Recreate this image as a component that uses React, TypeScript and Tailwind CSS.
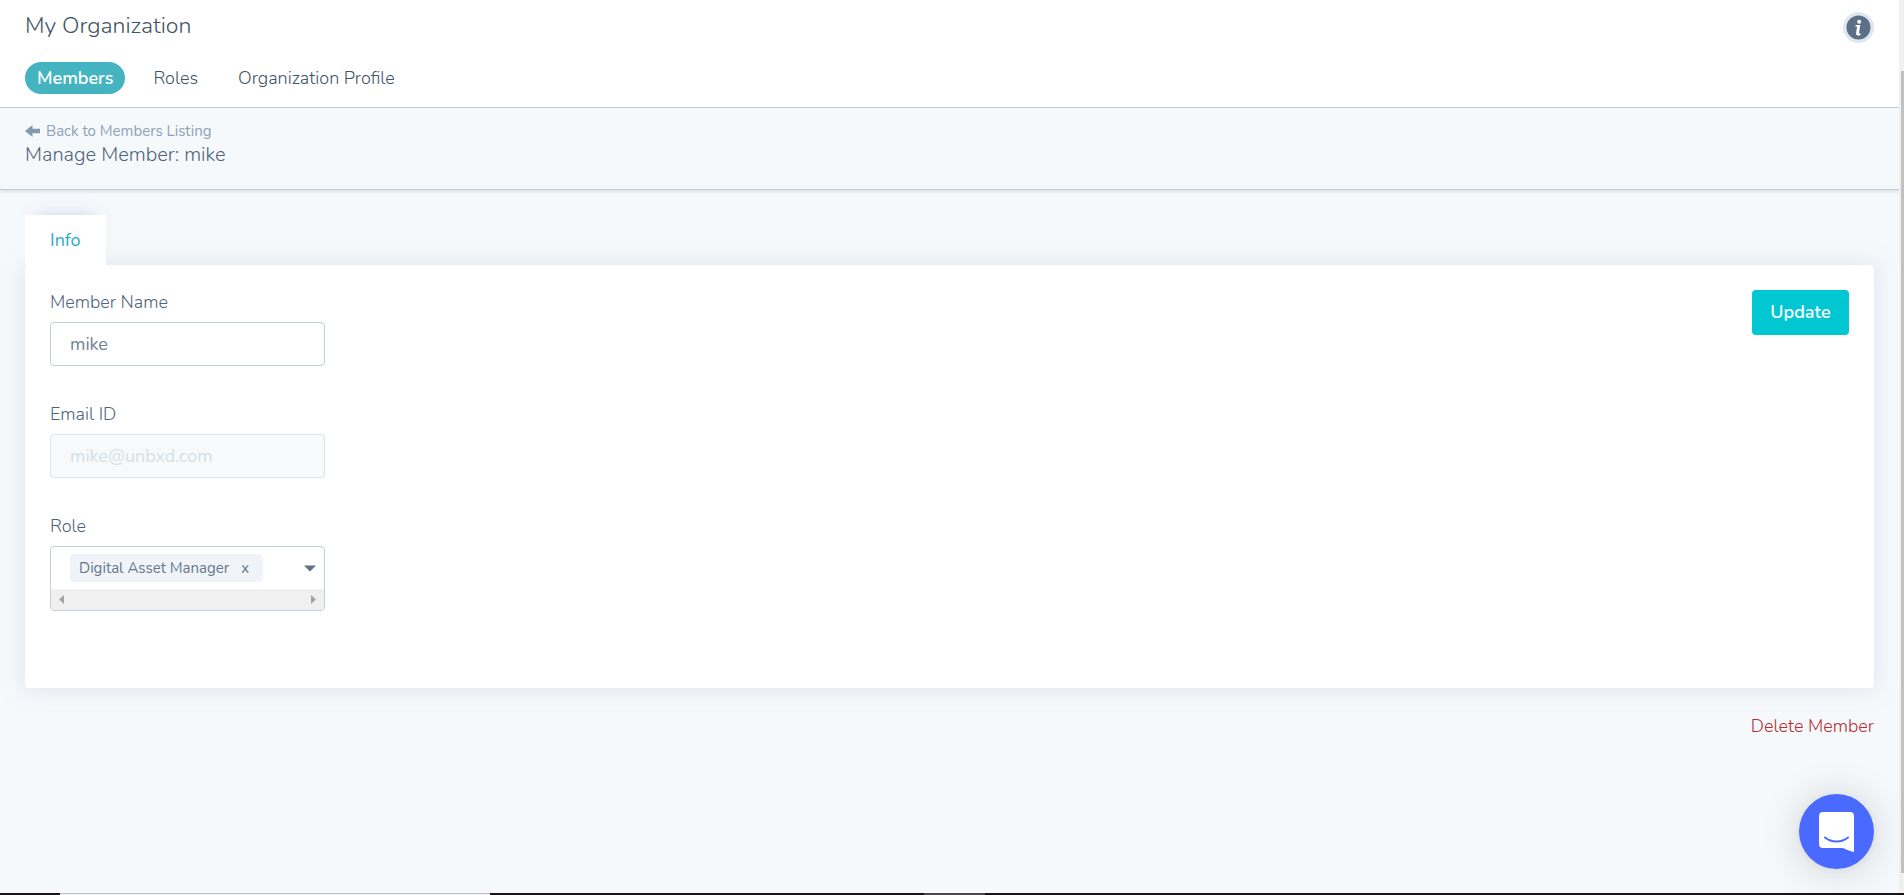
import React, { useState } from 'react';
import { clsx } from 'clsx';

const TABS = ['Members', 'Roles', 'Organization Profile'];

const InfoIcon = () => (
  <svg viewBox="0 0 31 31" className="size-[31px]" aria-hidden="true">
    <circle cx="15.5" cy="15.5" r="15.5" fill="#dfe7ef" />
    <circle cx="15.5" cy="15.5" r="12" fill="#5c6f87" />
    <circle cx="16.2" cy="9.8" r="2" fill="#fff" />
    <path
      d="M12.6 13h4.7l-1.3 7.500c-.1.6.1.9.6.9h1.100l-.2 1.500c-.8.4-1.600.5-2.300.5-1.700 0-2.400-1-2.100-2.500l1-6.400h-1.700z"
      fill="#fff"
    />
  </svg>
);

const BackArrow = () => (
  <svg viewBox="0 0 15 12" className="h-3 w-[15px]" aria-hidden="true">
    <path d="M0 6 7.5 0v3.8H15v4.4H7.5V12z" fill="#8399af" />
  </svg>
);

const ChatIcon = () => (
  <svg viewBox="0 0 35 40" className="h-10 w-[35px]" aria-hidden="true">
    <path d="M4 0h27a4 4 0 0 1 4 4v36c-4-1-7.500-2.400-11-4H4a4 4 0 0 1-4-4V4a4 4 0 0 1 4-4z" fill="#fff" />
    <path d="M6 25.500c6.500 5.300 16.500 5.300 23 0" fill="none" stroke="#4a69ff" strokeWidth="2" strokeLinecap="round" />
  </svg>
);

const Header = () => {
  const [active, setActive] = useState('Members');

  return (
    <header className="h-[108px] border-b border-[#c3cad0] bg-white px-[25px] pt-3">
      <div className="flex items-start justify-between">
        <h1 className="text-[23px] leading-7 font-light text-[#3f5364]">My Organization</h1>
        <button type="button" aria-label="Information">
          <InfoIcon />
        </button>
      </div>
      <nav className="mt-[19px] flex gap-4">
        {TABS.map((tab) => (
          <button
            key={tab}
            type="button"
            onClick={() => setActive(tab)}
            className={clsx(
              'h-8 rounded-full px-3 text-[18px] leading-6',
              tab === active ? 'bg-[#45b4c1] font-semibold text-white' : 'font-light text-[#3f5364]'
            )}>
            {tab}
          </button>
        ))}
      </nav>
    </header>
  );
};

const RoleSelect = () => {
  const [roles, setRoles] = useState(['Digital Asset Manager']);

  return (
    <div
      role="group"
      aria-labelledby="role-label"
      className="overflow-hidden rounded border border-[#c3cddb] bg-white">
      <div className="flex h-[42px] items-center justify-between pr-2 pl-[19px]">
        <div className="flex gap-2">
          {roles.map((role) => (
            <span
              key={role}
              className="flex h-7 items-center gap-3 rounded bg-[#f0f4f8] pr-[14px] pl-[9px] text-[15px] font-normal text-[#64788f]">
              {role}
              <button
                type="button"
                aria-label={`Remove ${role}`}
                onClick={() => setRoles(roles.filter((r) => r !== role))}>
                x
              </button>
            </span>
          ))}
        </div>
        <button type="button" aria-label="Open roles">
          <svg viewBox="0 0 12 7" className="h-[7px] w-3" aria-hidden="true">
            <path d="M0 .5h12L6 6.500z" fill="#5c7188" />
          </svg>
        </button>
      </div>
      <div className="flex h-[21px] items-center justify-between bg-[#f0f0f0] px-2">
        <svg viewBox="0 0 5 9" className="h-[9px] w-[5px]" aria-hidden="true">
          <path d="M5 0v9L0 4.500z" fill="#a3a3a3" />
        </svg>
        <svg viewBox="0 0 5 9" className="h-[9px] w-[5px]" aria-hidden="true">
          <path d="M0 0v9l5-4.500z" fill="#a3a3a3" />
        </svg>
      </div>
    </div>
  );
};

const MemberForm = () => {
  const [name, setName] = useState('mike');

  return (
    <section className="flex items-start justify-between rounded-sm bg-white px-[25px] pt-[25px] pb-[77px] shadow-[0_0_20px_rgba(200,205,228,0.5)]">
      <form id="member-form" className="flex w-[275px] flex-col gap-9 text-[18px] leading-6 font-light text-[#4f6379]">
        <div className="flex flex-col gap-2">
          <label htmlFor="member-name">Member Name</label>
          <input
            id="member-name"
            value={name}
            onChange={(e) => setName(e.target.value)}
            className="h-11 rounded border border-[#c3cddb] px-[19px] font-normal text-[#6f8394]"
          />
        </div>
        <div className="flex flex-col gap-2">
          <label htmlFor="member-email">Email ID</label>
          <input
            id="member-email"
            type="email"
            defaultValue="mike@unbxd.com"
            disabled
            className="h-11 rounded border border-[#dae4ec] bg-[#f7f9fb] px-[19px] font-normal text-[#d5dfe6]"
          />
        </div>
        <div className="flex flex-col gap-2">
          <span id="role-label">Role</span>
          <RoleSelect />
        </div>
      </form>
      <button
        type="submit"
        form="member-form"
        className="h-[45px] w-[97px] rounded-sm bg-[#00c7d2] text-[18px] font-semibold text-white">
        Update
      </button>
    </section>
  );
};

const Scrollbar = () => (
  <div className="flex w-[5px] shrink-0 flex-col items-end bg-[#f0f0f0]" aria-hidden="true">
    <div className="h-[8%]" />
    <div className="w-[3px] flex-1 bg-[#c1c1c1]" />
    <div className="h-5" />
  </div>
);

const BottomEdge = () => (
  <div className="flex h-[2px] shrink-0 bg-[#171419]" aria-hidden="true">
    <div className="ml-[60px] w-[430px] border-t border-[#bfc3c7] bg-[#f1f1f1]" />
    <div className="ml-[434px] w-[61px] bg-[#4a484b]" />
  </div>
);

export default function App() {
  return (
    <div className="flex h-screen flex-col bg-[#f5f9fc] font-['Nunito','Lato',sans-serif]">
      <div className="flex min-h-0 flex-1">
        <div className="min-w-0 flex-1 overflow-hidden">
          <Header />
          <div className="h-[82px] border-b border-[#c3cdd5] px-[25px] pt-[11px] shadow-[0_2px_3px_rgba(120,140,160,0.2)]">
            <a href="#members" className="flex w-fit items-center gap-[6px] text-[15px] leading-6 text-[#8ea1b8]">
              <BackArrow />
              Back to Members Listing
            </a>
            <h2 className="text-[20px] leading-6 font-light text-[#4f6379]">Manage Member: mike</h2>
          </div>
          <main className="px-[25px] pt-[25px]">
            <button
              type="button"
              className="relative block h-[50px] bg-white px-[25px] text-[18px] text-[#2aaccd] shadow-[0_-10px_15px_-12px_rgba(170,178,220,0.7)]">
              Info
            </button>
            <MemberForm />
            <div className="mt-6 flex justify-end">
              <button type="button" className="text-[18px] leading-7 font-light text-[#b82c30]">
                Delete Member
              </button>
            </div>
          </main>
        </div>
        <Scrollbar />
      </div>
      <BottomEdge />
      <button
        type="button"
        aria-label="Open chat"
        className="fixed right-[30px] bottom-[26px] flex size-[75px] items-center justify-center rounded-full bg-[#4a69ff] shadow-[0_2px_40px_rgba(0,0,0,0.16),0_1px_8px_rgba(0,0,0,0.06)]">
        <ChatIcon />
      </button>
    </div>
  );
}
